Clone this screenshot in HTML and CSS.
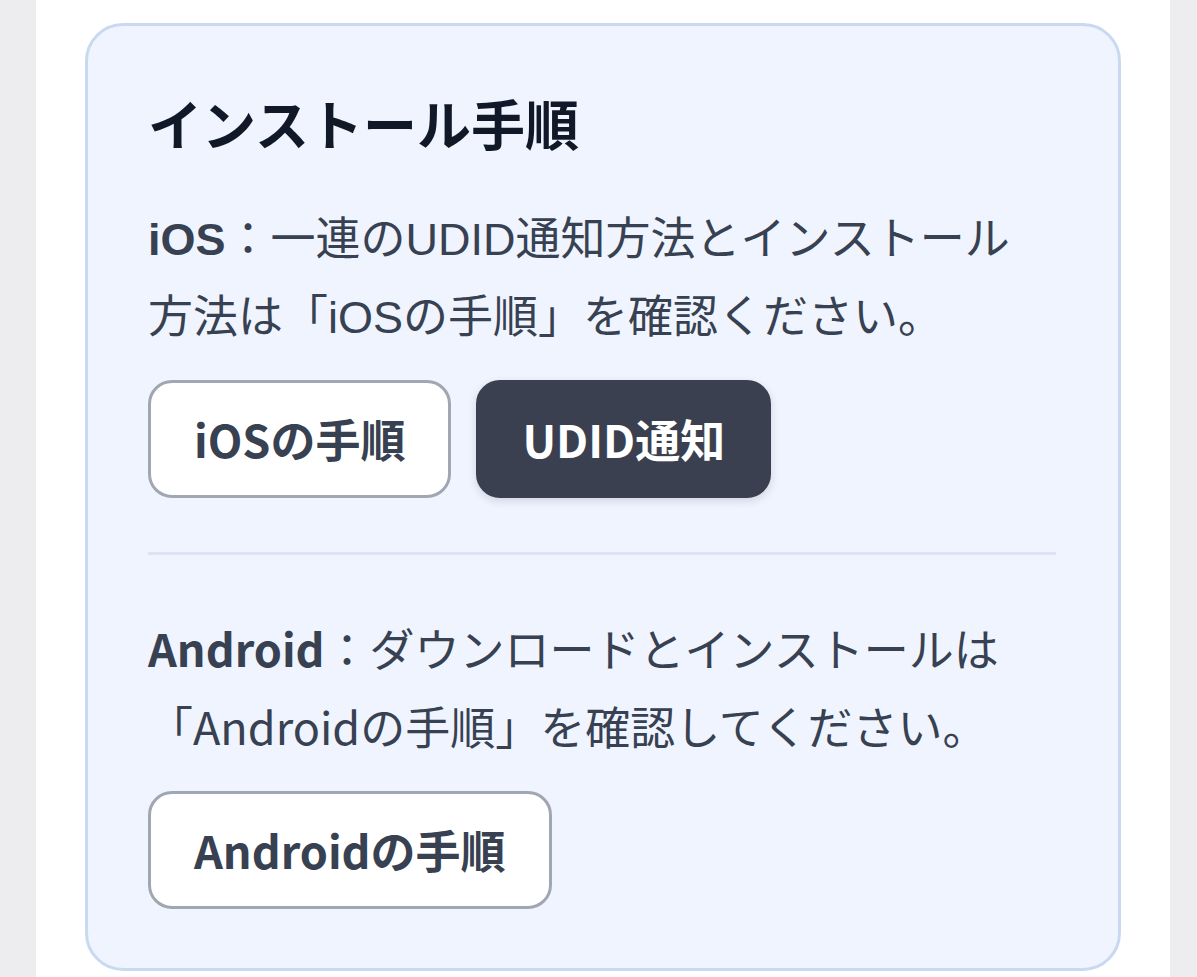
FILE: index.html
```html
<!DOCTYPE html>
<html lang="ja">
<head>
    <meta charset="UTF-8">
    <meta name="viewport" content="width=device-width, initial-scale=1.0">
    <title>インストール手順</title>
    <link rel="stylesheet" href="styles.css">
</head>
<body>
    <div class="page">
        <div class="card">
            <h2 class="card-title">インストール手順</h2>

            <p class="note note-ios"><strong>iOS</strong>：一連のUDID通知方法とインストール方法は「iOSの手順」を確認ください。</p>
            <div class="actions">
                <a class="btn btn-outline" href="#">iOSの手順</a>
                <a class="btn btn-dark" href="#">UDID通知</a>
            </div>

            <hr class="divider">

            <p class="note note-android"><strong>Android</strong>：ダウンロードとインストールは「Androidの手順」を確認してください。</p>
            <div class="actions">
                <a class="btn btn-outline" href="#">Androidの手順</a>
            </div>
        </div>
    </div>
</body>
</html>
```

FILE: styles.css
```css
html, body {
    margin: 0;
    padding: 0;
    background-color: #ededf0;
}
body {
    font-family: "Noto Sans CJK JP", sans-serif;
    color: #374151;
}
.page {
    margin: 0 27px 0 36px;
    background-color: #ffffff;
    padding: 23px 49px 8px;
    min-height: 977px;
    box-sizing: border-box;
}
.card {
    background-color: #eff4fe;
    border: 3px solid #c9d9f1;
    border-radius: 38px;
    padding: 62px 62px 59px 60px;
}
.card-title {
    margin: 0 0 43px;
    font-size: 54px;
    line-height: 70px;
    font-weight: 700;
    color: #111827;
}
.note {
    margin: 0;
    max-width: 880px;
    font-size: 45px;
    line-height: 78px;
}
.note strong {
    font-weight: 700;
}
.note-ios {
    font-family: "Liberation Sans", "Noto Sans CJK JP", sans-serif;
}
.actions {
    display: flex;
    gap: 25px;
    margin-top: 23px;
}
.btn {
    display: inline-block;
    box-sizing: border-box;
    height: 118px;
    line-height: 112px;
    padding: 0 43px;
    border-radius: 24px;
    font-size: 45px;
    font-weight: 700;
    text-decoration: none;
    color: #374151;
}
.btn-outline {
    background-color: #ffffff;
    border: 3px solid #a1a7b2;
}
.btn-dark {
    background-color: #3a4050;
    border: 3px solid #3a4050;
    color: #ffffff;
    box-shadow: 0 3px 8px rgba(30, 40, 60, 0.15);
}
.divider {
    margin: 54px 0;
    border: 0;
    height: 3px;
    background-color: #dbe4f5;
}
.note-android + .actions {
    margin-top: 26px;
}
```
